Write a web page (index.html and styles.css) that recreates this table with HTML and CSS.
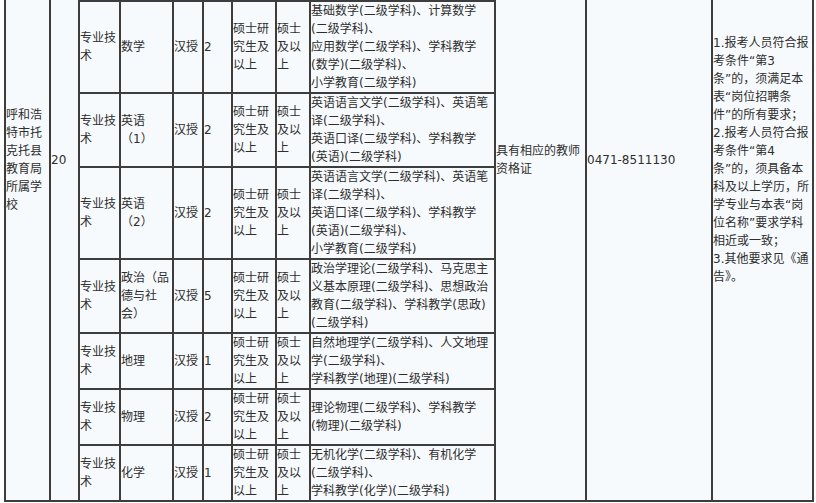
FILE: index.html
```html
<!DOCTYPE html>
<html lang="zh-CN">
<head>
<meta charset="utf-8">
<title>岗位表</title>
<link rel="stylesheet" href="styles.css">
</head>
<body>
<div class="sheet">
<table class="posts">
<tbody>
<tr class="lead">
<td class="c1" rowspan="8">呼和浩<br>特市托<br>克托县<br>教育局<br>所属学<br>校</td>
<td class="c2" rowspan="8">20</td>
<td class="c3 gap"></td>
<td class="c4 gap"></td>
<td class="c5 gap"></td>
<td class="c6 gap"></td>
<td class="c7 gap"></td>
<td class="c8 gap"></td>
<td class="c9 gap"></td>
<td class="c10" rowspan="8">具有相应的教师<br>资格证</td>
<td class="c11" rowspan="8">0471-8511130</td>
<td class="c12" rowspan="8">1.报考人员符合报<br>考条件“第3<br>条”的，须满足本<br>表“岗位招聘条<br>件”的所有要求；<br>2.报考人员符合报<br>考条件“第4<br>条”的，须具备本<br>科及以上学历，所<br>学专业与本表“岗<br>位名称”要求学科<br>相近或一致；<br>3.其他要求见《通<br>告》。</td>
</tr>
<tr>
<td>专业技<br>术</td><td>数学</td><td>汉授</td><td>2</td><td>硕士研<br>究生及<br>以上</td><td>硕士<br>及以<br>上</td>
<td>基础数学(二级学科)、计算数学<br>(二级学科)、<br>应用数学(二级学科)、学科教学<br>(数学)(二级学科)、<br>小学教育(二级学科)</td>
</tr>
<tr>
<td>专业技<br>术</td><td>英语<br>（1）</td><td>汉授</td><td>2</td><td>硕士研<br>究生及<br>以上</td><td>硕士<br>及以<br>上</td>
<td>英语语言文学(二级学科)、英语笔<br>译(二级学科)、<br>英语口译(二级学科)、学科教学<br>(英语)(二级学科)</td>
</tr>
<tr>
<td>专业技<br>术</td><td>英语<br>（2）</td><td>汉授</td><td>2</td><td>硕士研<br>究生及<br>以上</td><td>硕士<br>及以<br>上</td>
<td>英语语言文学(二级学科)、英语笔<br>译(二级学科)、<br>英语口译(二级学科)、学科教学<br>(英语)(二级学科)、<br>小学教育(二级学科)</td>
</tr>
<tr>
<td>专业技<br>术</td><td>政治（品<br>德与社<br>会）</td><td>汉授</td><td>5</td><td>硕士研<br>究生及<br>以上</td><td>硕士<br>及以<br>上</td>
<td>政治学理论(二级学科)、马克思主<br>义基本原理(二级学科)、思想政治<br>教育(二级学科)、学科教学(思政)<br>(二级学科)</td>
</tr>
<tr>
<td>专业技<br>术</td><td>地理</td><td>汉授</td><td>1</td><td>硕士研<br>究生及<br>以上</td><td>硕士<br>及以<br>上</td>
<td>自然地理学(二级学科)、人文地理<br>学(二级学科)、<br>学科教学(地理)(二级学科)</td>
</tr>
<tr>
<td>专业技<br>术</td><td>物理</td><td>汉授</td><td>2</td><td>硕士研<br>究生及<br>以上</td><td>硕士<br>及以<br>上</td>
<td>理论物理(二级学科)、学科教学<br>(物理)(二级学科)</td>
</tr>
<tr>
<td>专业技<br>术</td><td>化学</td><td>汉授</td><td>1</td><td>硕士研<br>究生及<br>以上</td><td>硕士<br>及以<br>上</td>
<td>无机化学(二级学科)、有机化学<br>(二级学科)、<br>学科教学(化学)(二级学科)</td>
</tr>
</tbody>
</table>
</div>
</body>
</html>
```

FILE: styles.css
```css
* {
  box-sizing: border-box;
}

html,
body {
  margin: 0;
  padding: 0;
  background: #ffffff;
}

body {
  font-family: "DejaVu Sans", "Noto Sans CJK SC", sans-serif;
  font-size: 12px;
  line-height: 18px;
  color: #2e2e2e;
}

.sheet {
  height: 503px;
  overflow: hidden;
  padding-left: 4px;
}

.posts {
  margin-top: -183px;
  width: 810px;
  table-layout: fixed;
  border-collapse: separate;
  border-spacing: 0;
  border: 1px solid #3d3d3d;
  background: #f7fafd;
}

.posts td {
  border: 1px solid #3d3d3d;
  padding: 0;
  vertical-align: middle;
  text-align: left;
  white-space: nowrap;
  overflow: hidden;
  background: #f7fafd;
}

.posts .gap {
  height: 183px;
}

.c1 { width: 45px; }
.c2 { width: 29px; }
.c3 { width: 41px; }
.c4 { width: 53px; }
.c5 { width: 30px; }
.c6 { width: 29px; }
.c7 { width: 44px; }
.c8 { width: 34px; }
.c9 { width: 185px; }
.c10 { width: 91px; }
.c11 { width: 126px; }
.c12 { width: 101px; }
```
